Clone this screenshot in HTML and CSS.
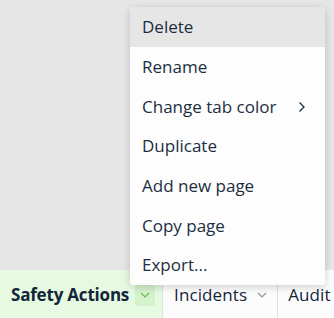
FILE: index.html
```html
<!DOCTYPE html>
<html>
<head>
<meta charset="utf-8">
<link rel="stylesheet" href="styles.css">
</head>
<body>
<div class="page">
  <div class="canvas"></div>
  <div class="tabs">
    <div class="tab tab-active">
      <span class="tab-label">Safety Actions</span>
      <span class="tab-caret tab-caret-active">
        <svg width="10" height="6" viewBox="0 0 10 6"><path d="M1 1 L5 5 L9 1" fill="none" stroke="#66bb55" stroke-width="1.2"/></svg>
      </span>
    </div>
    <div class="tab">
      <span class="tab-label">Incidents</span>
      <span class="tab-caret">
        <svg width="10" height="6" viewBox="0 0 10 6"><path d="M1 1 L5 5 L9 1" fill="none" stroke="#8a949e" stroke-width="1.2"/></svg>
      </span>
    </div>
    <div class="tab tab-last">
      <span class="tab-label">Audit</span>
    </div>
  </div>
  <ul class="menu">
    <li class="menu-item is-hover">Delete</li>
    <li class="menu-item">Rename</li>
    <li class="menu-item">Change tab color
      <svg class="sub" width="8" height="12" viewBox="0 0 8 12"><path d="M1.5 1.5 L6 6 L1.5 10.5" fill="none" stroke="#1c2e40" stroke-width="1.3"/></svg>
    </li>
    <li class="menu-item">Duplicate</li>
    <li class="menu-item">Add new page</li>
    <li class="menu-item">Copy page</li>
    <li class="menu-item">Export...</li>
  </ul>
</div>
</body>
</html>
```
FILE: styles.css
```css
html, body {
  margin: 0;
  padding: 0;
}
body {
  font-family: "Open Sans", "Noto Sans", sans-serif;
  background: #e6e6e6;
  width: 334px;
  height: 318px;
  overflow: hidden;
}
.page {
  position: relative;
  width: 334px;
  height: 318px;
  display: flex;
  flex-direction: column;
}
.canvas {
  height: 270px;
  flex-shrink: 0;
  background: #e6e6e6;
}
.tabs {
  display: flex;
  height: 48px;
  background: #fcfcfc;
}
.tab {
  display: flex;
  flex-shrink: 0;
  align-items: center;
  gap: 5px;
  padding: 0 5px 0 11px;
  border-right: 1px solid #e0e0e0;
  font-size: 17px;
  letter-spacing: 0.1px;
  white-space: nowrap;
  color: #13253a;
}
.tab-active {
  background: #e6f9e1;
  font-weight: 700;
  letter-spacing: -0.2px;
  gap: 6px;
  padding-right: 7px;
}
.tab-last {
  padding-left: 10px;
}
.tab-caret {
  display: flex;
  align-items: center;
  justify-content: center;
  width: 20px;
  height: 21px;
  margin-top: 2px;
}
.tab-caret-active {
  background: #d4f2cb;
  border-radius: 3px;
}
.menu {
  position: absolute;
  left: 130px;
  top: 7px;
  width: 195px;
  margin: 0;
  padding: 0;
  list-style: none;
  background: #fdfdfd;
  border-radius: 3px;
  box-shadow: 0 2px 8px rgba(0,0,0,0.18);
  overflow: hidden;
}
.menu-item {
  display: flex;
  align-items: center;
  justify-content: space-between;
  height: 39.7px;
  padding: 0 19px 0 12px;
  font-size: 17px;
  white-space: nowrap;
  color: #1c2e40;
}
.menu-item.is-hover {
  background: #e6e6e6;
}
.sub {
  margin-top: 1px;
}
```
